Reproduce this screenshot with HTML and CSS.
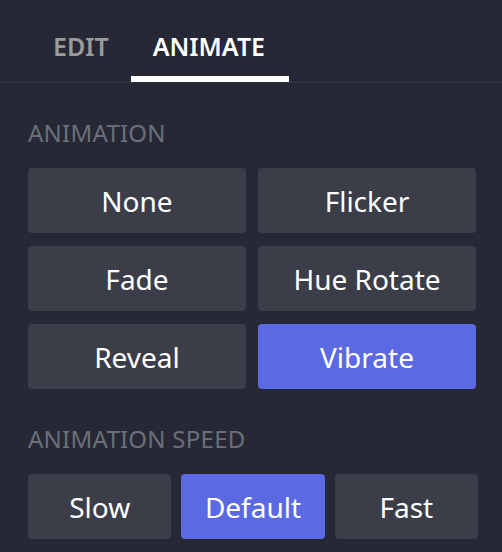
FILE: index.html
```html
<!DOCTYPE html>
<html>
<head>
<meta charset="utf-8">
<link rel="stylesheet" href="styles.css">
</head>
<body>
<div class="panel">
  <div class="tabs">
    <div class="tab">EDIT</div>
    <div class="tab active">ANIMATE</div>
  </div>
  <div class="section first">
    <div class="label">ANIMATION</div>
    <div class="grid two">
      <div class="btn">None</div>
      <div class="btn">Flicker</div>
      <div class="btn">Fade</div>
      <div class="btn">Hue Rotate</div>
      <div class="btn">Reveal</div>
      <div class="btn selected">Vibrate</div>
    </div>
  </div>
  <div class="section second">
    <div class="label">ANIMATION SPEED</div>
    <div class="grid three">
      <div class="btn">Slow</div>
      <div class="btn selected">Default</div>
      <div class="btn">Fast</div>
    </div>
  </div>
</div>
</body>
</html>
```
FILE: styles.css
```css
html, body {
  margin: 0;
  padding: 0;
  background: #262935;
}
body {
  font-family: "Noto Sans", "Open Sans", sans-serif;
  color: #ffffff;
  width: 502px;
  height: 552px;
  overflow: hidden;
}
.tabs {
  display: flex;
  padding-left: 31px;
  height: 81px;
  border-bottom: 2px solid #30333f;
}
.tab {
  padding: 34px 22px 0;
  height: 42px;
  font-size: 25px;
  line-height: 25px;
  font-weight: 600;
  color: #9b9b9b;
}
.tab.active {
  color: #ffffff;
  border-bottom: 6px solid #ffffff;
  padding-right: 24px;
}
.section {
  padding: 0 26px 0 28px;
}
.section.first {
  padding-top: 38px;
}
.section.second {
  padding-top: 38px;
}
.label {
  font-size: 24px;
  line-height: 24px;
  color: #6c6f79;
  letter-spacing: 0.25px;
  margin-bottom: 23px;
}
.grid {
  display: grid;
  gap: 13px 12px;
}
.grid.two {
  grid-template-columns: 1fr 1fr;
}
.grid.three {
  grid-template-columns: 1fr 1fr 1fr;
  gap: 10px;
  margin-right: -2px;
}
.btn {
  height: 65px;
  border-radius: 4px;
  background: #3b3e49;
  display: flex;
  align-items: center;
  justify-content: center;
  font-size: 28px;
  line-height: 28px;
}
.btn.selected {
  background: #5b6ae3;
}
```
